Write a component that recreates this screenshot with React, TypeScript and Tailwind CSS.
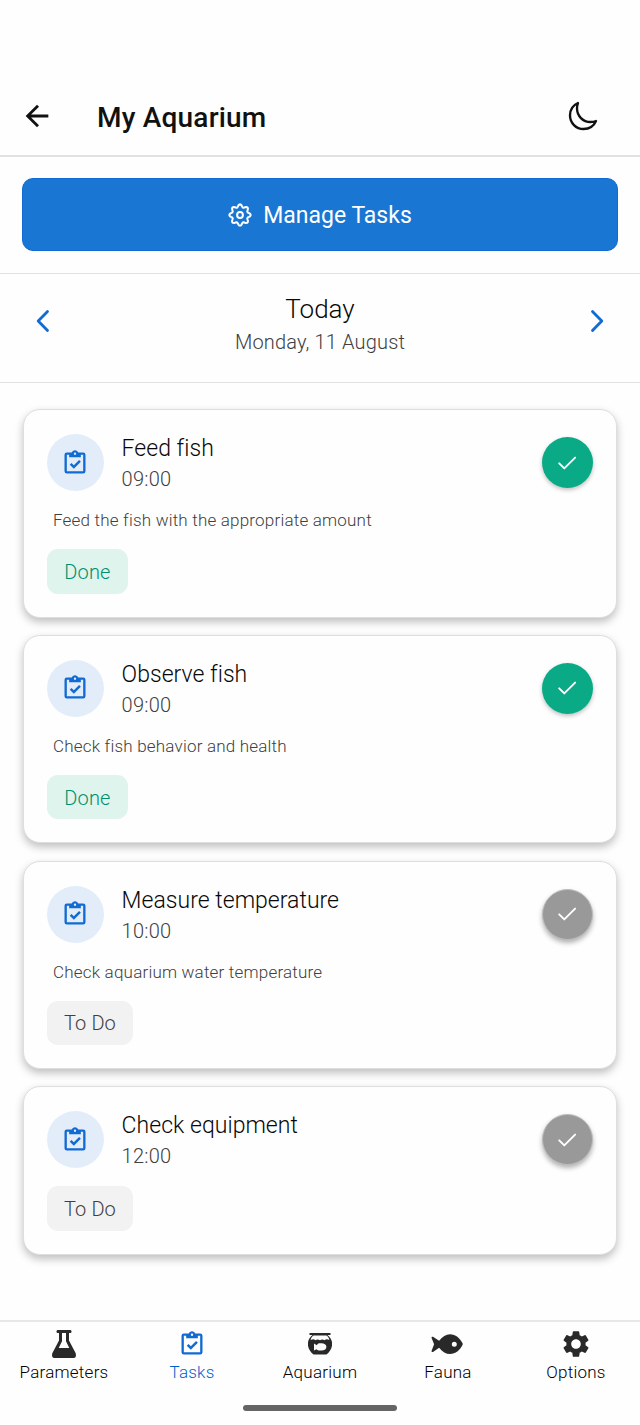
import React from "react";
import { MdArrowBack, MdSettings } from "react-icons/md";
import { IoMoonOutline } from "react-icons/io5";

function ClipboardCheck({ size }: { size: number }) {
  return (
    <svg width={size} height={size} viewBox="0 0 24 24" fill="currentColor">
      <path d="M19 3h-4.18C14.4 1.84 13.3 1 12 1s-2.4.84-2.82 2H5a2 2 0 0 0-2 2v14a2 2 0 0 0 2 2h14a2 2 0 0 0 2-2V5a2 2 0 0 0-2-2m-7 0a1 1 0 0 1 1 1a1 1 0 0 1-1 1a1 1 0 0 1-1-1a1 1 0 0 1 1-1M7 7h10V5h2v14H5V5h2v2m.5 6.5L9 12l2 2l4.500-4.500L17 11l-6 6l-3.500-3.500z" />
    </svg>
  );
}

const gearOutline = Array.from({ length: 96 }, (_, i) => {
  const a = (i / 96) * Math.PI * 2;
  const r = 9.3 + 1.35 * Math.cos(8 * a);
  return `${(12 + r * Math.cos(a)).toFixed(2)},${(12 + r * Math.sin(a)).toFixed(2)}`;
}).join(" ");

function GearOutline() {
  return (
    <svg width="24" height="24" viewBox="0 0 24 24" fill="none" stroke="currentColor" strokeWidth="2" strokeLinejoin="round">
      <polygon points={gearOutline} />
      <circle cx="12" cy="12" r="2.900" />
    </svg>
  );
}

function Chevron({ flip }: { flip?: boolean }) {
  return (
    <svg className="mt-[14px]" width="29" height="29" viewBox="0 0 29 29" fill="none" stroke="#116bd3" strokeWidth="2.800" strokeLinecap="round" strokeLinejoin="round">
      <path d={flip ? "M9.500 5.600l9.300 9.500-9.300 9.500" : "M19.500 5.600l-9.300 9.500 9.300 9.500"} />
    </svg>
  );
}

function Check() {
  return (
    <svg className="-translate-x-px" width="24" height="24" viewBox="0 0 24 24" fill="none" stroke="currentColor" strokeWidth="1.900" strokeLinecap="round" strokeLinejoin="round">
      <path d="M4.200 12.300l5.100 5.100L20.100 6.600" />
    </svg>
  );
}

function Flask() {
  return (
    <svg width="26" height="28" viewBox="0 0 26 28" fill="currentColor" fillRule="evenodd">
      <path d="M6.500 0h13q1 0 1 1.500t-1 1.500H18v7.500l6.700 12.700q1.200 4.800-2.200 4.800h-19q-3.400 0-2.200-4.800L8 10.500V3H6.500q-1 0-1-1.500t1-1.500zM11 3v8.300L7.700 18h10.600L15 11.300V3z" />
    </svg>
  );
}

function Fishbowl() {
  return (
    <svg width="24" height="22" viewBox="0 0 24 22">
      <path d="M1.500 0h21v2h-3C27 8 24.500 17 18.500 21.500h-13C-.500 17-3 8 4.500 2h-3zM5.500 2.500C3.600 4 2.800 5.300 2.700 7c2-1 3.300-1 4.700.200 1.500-1 3-1 4.600 0 1.600-1 3.100-1 4.600 0 1.400-1.200 2.700-1.200 4.700-.200-.100-1.700-.900-3-2.800-4.500z" fill="currentColor" fillRule="evenodd" />
      <path d="M6 10.500l2.800 1.700c1-1.600 2-2.200 3.600-1.900 3.700-.300 5.700 1 6 3.200.100 2.700-1.600 4-5.300 4-2.300.100-4-.300-4.700-1.200L6 17.500z" fill="#fff" />
    </svg>
  );
}

function Fish() {
  return (
    <svg className="-translate-x-px" width="32" height="21" viewBox="0 0 32 21" fill="currentColor" fillRule="evenodd">
      <path d="M.700 4.300C0 3 1.300 2.300 2.400 2.900l5.700 3.900C11.500 2.600 15 .300 19 .300c5.500 0 10 3.900 12.600 9q.300.900 0 1.500C29 16.200 24.500 20 19 20c-4 0-7.500-2.200-10.900-6.300L2.400 17.800c-1.300.700-2.200.100-1.700-1.300l2.400-6.200zM23.300 7.700a2.500 2.500 0 1 0 0 5a2.500 2.500 0 1 0 0-5z" />
    </svg>
  );
}

type Task = { title: string; time: string; note?: string; done: boolean };

const tasks: Task[] = [
  { title: "Feed fish", time: "09:00", note: "Feed the fish with the appropriate amount", done: true },
  { title: "Observe fish", time: "09:00", note: "Check fish behavior and health", done: true },
  { title: "Measure temperature", time: "10:00", note: "Check aquarium water temperature", done: false },
  { title: "Check equipment", time: "12:00", done: false },
];

function TaskCard({ task }: { task: Task }) {
  return (
    <article className="rounded-[17px] border-[1.5px] border-[#dedede] bg-[#fefefe] px-[23px] pt-[24px] pb-[23px] shadow-[0_4px_8px_rgba(0,0,0,0.25)]">
      <div className="flex h-[57px] items-center">
        <div className="flex size-[57px] items-center justify-center rounded-full bg-[#e3edfa] pr-px text-[#116bd3]">
          <ClipboardCheck size={28} />
        </div>
        <div className="ml-[17.6px] flex-1 pt-[3px]">
          <h2 className="text-[23px] leading-[31px] font-[350] tracking-[0.03px] text-[#080808]">{task.title}</h2>
          <p className="text-[20px] leading-[31px] font-[350] tracking-[0.25px] text-[#404040]">{task.time}</p>
        </div>
        <div className={task.done ? "flex size-[51px] items-center justify-center rounded-full bg-[#0aaa87] text-white shadow-[0_2px_4px_rgba(0,0,0,0.25)]" : "flex size-[51px] items-center justify-center rounded-full border-[1.5px] border-[#bdbdbd] bg-[#999] text-white shadow-[0_3px_5px_rgba(0,0,0,0.3)]"}>
          <Check />
        </div>
      </div>
      {task.note && <p className="mt-[17px] pl-[6px] text-[17px] leading-[24px] font-[350] tracking-[0.2px] text-[#404040]">{task.note}</p>}
      <div className={task.note ? "mt-[17px]" : "mt-[18px]"}>
        <span className={task.done ? "flex h-[44.5px] w-[81px] items-center justify-center rounded-[11px] bg-[#e0f4ee] pt-px text-[20px] font-[350] tracking-[0.15px] text-[#008f6a]" : "flex h-[44.5px] w-[86px] items-center justify-center rounded-[11px] bg-[#f2f2f2] pt-px text-[20px] font-[350] tracking-[0.1px] text-[#404040]"}>
          {task.done ? "Done" : "To Do"}
        </span>
      </div>
    </article>
  );
}

const tabs = [
  { label: "Parameters", icon: <Flask /> },
  { label: "Tasks", icon: <ClipboardCheck size={28} />, active: true },
  { label: "Aquarium", icon: <Fishbowl /> },
  { label: "Fauna", icon: <Fish /> },
  { label: "Options", icon: <MdSettings size={32} /> },
];

export default function App() {
  return (
    <div className="flex h-[1425px] w-[640px] flex-col overflow-hidden bg-[#fefefe] font-['Roboto',sans-serif]">
      <header className="flex h-[157px] shrink-0 items-center border-b-2 border-[#e1e1e1] pt-[77px] pr-[41px] pl-[20px] text-[#111]">
        <MdArrowBack size={34} />
        <h1 className="ml-[43px] flex-1 pt-[4px] text-[28px] font-medium tracking-[0.2px]">My Aquarium</h1>
        <IoMoonOutline size={32} className="[&_path]:[stroke-width:38]" />
      </header>
      <div className="h-[117px] shrink-0 border-b border-[#e1e1e1] px-[22px] pt-[21px]">
        <button className="flex h-[73px] w-full items-center justify-center gap-[11px] rounded-[11px] border border-[#116bd3] bg-[#1a76d3] text-[23px] text-white">
          <GearOutline />
          <span className="pt-[4px]">Manage Tasks</span>
        </button>
      </div>
      <div className="flex h-[109px] shrink-0 items-start justify-between border-b-[1.5px] border-[#e1e1e1] px-[28px] pt-[18px]">
        <Chevron />
        <div className="text-center">
          <div className="text-[26px] leading-[34px] font-[350] text-[#080808]">Today</div>
          <div className="text-[20px] leading-[32px] font-[350] tracking-[0.15px] text-[#404040]">Monday, 11 August</div>
        </div>
        <Chevron flip />
      </div>
      <main className="flex flex-1 flex-col gap-[17.3px] px-[23px] pt-[26px]">
        {tasks.map((t) => <TaskCard key={t.title} task={t} />)}
      </main>
      <nav className="h-[105px] shrink-0 border-t-2 border-[#e8e8e8]">
        <div className="grid grid-cols-5">
          {tabs.map((t) => (
            <div key={t.label} className={t.active ? "flex flex-col items-center text-[#116bd3]" : "flex flex-col items-center text-[#292929]"}>
              <div className="mt-[6px] flex h-[32px] items-center">{t.icon}</div>
              <span className={t.active ? "text-[17px] leading-[24px] font-[350] tracking-[0.25px] text-[#0060d0]" : "text-[17px] leading-[24px] font-[350] tracking-[0.25px] text-black"}>{t.label}</span>
            </div>
          ))}
        </div>
        <div className="mx-auto mt-[21px] h-[6px] w-[154px] rounded-full bg-[#656565]" />
      </nav>
    </div>
  );
}
